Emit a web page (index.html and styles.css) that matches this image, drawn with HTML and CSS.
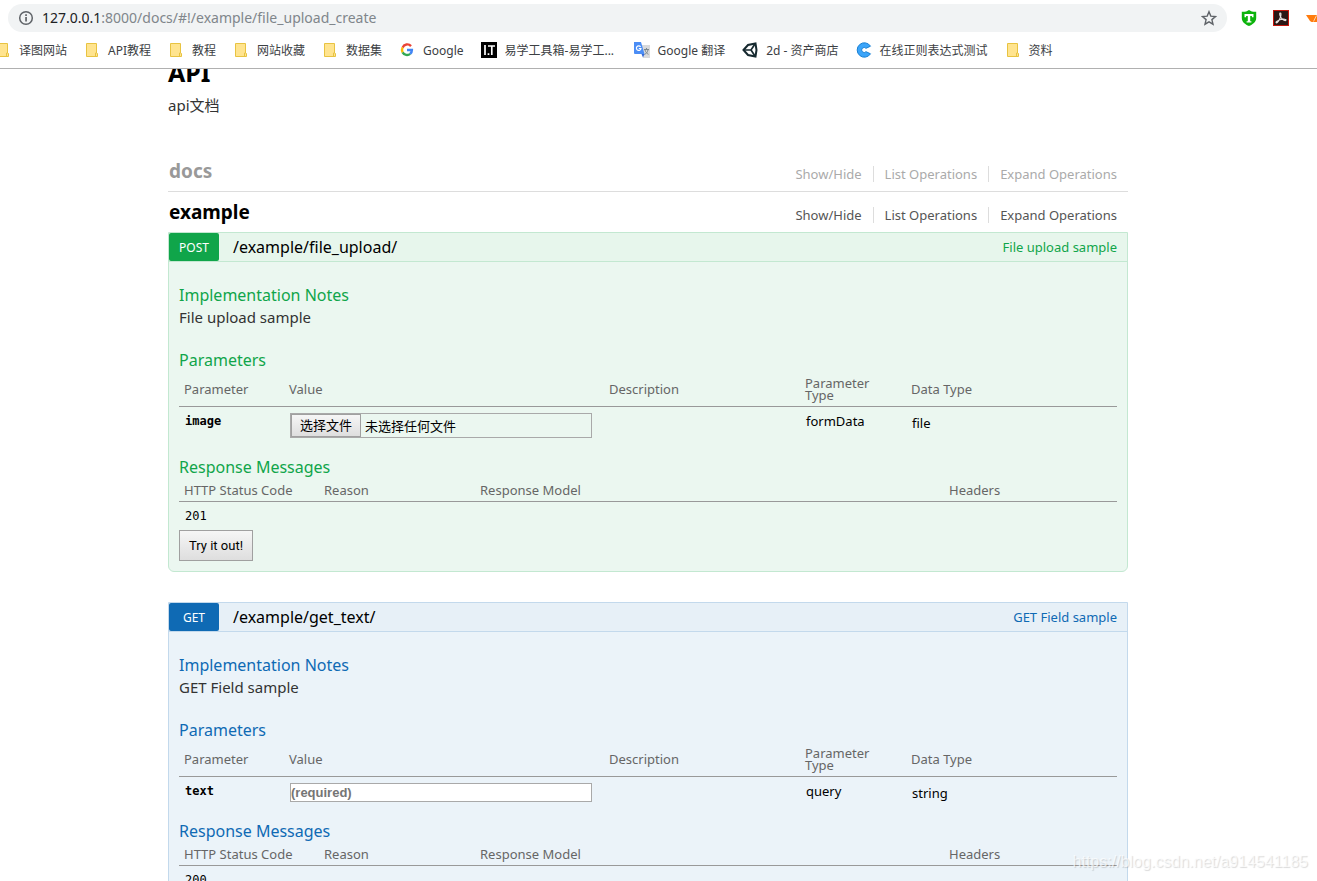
FILE: index.html
```html
<!DOCTYPE html>
<html lang="zh-CN">
<head>
<meta charset="utf-8">
<title>API</title>
<link rel="stylesheet" href="styles.css">
</head>
<body>
<svg class="defs" aria-hidden="true">
  <symbol id="folder" viewBox="0 0 16 16"><path d="M2.500 1.500h10v9.500l1 .5v3h-11z" fill="#ffe48f" stroke="#e8c341"/><path d="M11.500 14.500v-3.500h1" fill="none" stroke="#e8c341"/></symbol>
</svg>
<div class="browser">
  <header class="chrome">
    <div class="toolbar">
      <div class="omnibox">
        <svg class="icon" viewBox="0 0 16 16"><circle cx="8" cy="8" r="6.300" fill="none" stroke="#5f6368" stroke-width="1.500"/><path d="M7.200 7h1.700v4.500H7.200zM7.200 4.300h1.700v1.600H7.200z" fill="#5f6368"/></svg>
        <div class="url" role="textbox" aria-label="Address"><span class="host">127.0.0.1</span>:8000/docs/#!/example/file_upload_create</div>
        <button class="star" type="button" aria-label="Bookmark"><svg class="icon" viewBox="0 0 16 16"><path d="M8 1.700l1.800 4.400 4.700.4-3.600 3.100 1.100 4.600L8 11.800l-4 2.400 1.100-4.600L1.500 6.500l4.700-.4z" fill="none" stroke="#5f6368" stroke-width="1.400"/></svg></button>
      </div>
      <div class="extensions">
        <svg class="icon" viewBox="0 0 16 16"><path d="M8 0C6 1.500 3.500 2 .8 1.800V8c0 4 3.500 6.500 7.200 8 3.700-1.500 7.200-4 7.200-8V1.800C12.500 2 10 1.500 8 0z" fill="#0cb30c"/><path d="M3.500 4h9v3.200h-1.600V6H9.200v5.200h1.200v1.300H5.600v-1.300h1.200V6H5.100v1.200H3.500z" fill="#fff"/></svg>
        <svg class="icon" viewBox="0 0 16 16"><path d="M0 0h16v16H0z" fill="#c3150b"/><path d="M1 1h14v14H1z" fill="#2a1715"/><path d="M7 3c1.300-.5 1.100 2 .5 4C6.600 9.800 4.400 13.300 3.200 12.800c-1-.6 1.800-2.700 4.800-3.300 2.800-.6 5.300-.4 5 .7-.4 1.200-3.200-.4-4.800-2.400C7 6.200 6.100 3.600 7 3z" fill="none" stroke="#e8e1df" stroke-width="1.100"/></svg>
        <svg class="icon" viewBox="0 0 16 16"><path d="M1 5h15v7H6.500L5 11z" fill="#ff7b0d"/><path d="M8.500 11.500l3-6" stroke="#ffd0a5"/></svg>
      </div>
    </div>
    <nav class="bookmarks">
      <a href="#"><svg class="icon"><use href="#folder"/></svg>译图网站</a>
      <a href="#"><svg class="icon"><use href="#folder"/></svg>API教程</a>
      <a href="#"><svg class="icon"><use href="#folder"/></svg>教程</a>
      <a href="#"><svg class="icon"><use href="#folder"/></svg>网站收藏</a>
      <a href="#"><svg class="icon"><use href="#folder"/></svg>数据集</a>
      <a href="#"><svg class="icon" viewBox="0 0 16 16" fill="none" stroke-width="2.400"><path d="M12 4.100A5 5 0 0 0 3.600 5.600" stroke="#ea4335"/><path d="M3.600 5.600a5 5 0 0 0 0 4.800" stroke="#fbbc05"/><path d="M3.600 10.400a5 5 0 0 0 7.600 1.400" stroke="#34a853"/><path d="M11.200 11.800A5 5 0 0 0 12.900 8H8" stroke="#4285f4"/></svg>Google</a>
      <a href="#"><svg class="icon" viewBox="0 0 16 16"><path d="M0 0h16v16H0z" fill="#000"/><path d="M4 3v10M7.500 11.200v1.800M7 4h7M10.800 4v9" stroke="#fff" stroke-width="1.700" fill="none"/></svg><span class="long">易学工具箱-易学工...</span></a>
      <a href="#"><svg class="icon" viewBox="0 0 16 16"><path d="M6 3h10v13H9z" fill="#d8d9dc"/><path d="M10 7.500h5M12.500 6v1.500M14 8c-.5 2-1.500 3.500-3.500 4.500M11 8c.5 2 1.800 3.500 3.500 4.300" stroke="#7b868c" fill="none"/><path d="M0 0h7l3.500 12H1a1 1 0 0 1-1-1z" fill="#4b8df5"/><path d="M7.500 12h3L9 15.500z" fill="#3367d6"/><path d="M6.600 4.800A2.300 2.300 0 1 0 7 6.500H4.800" stroke="#fff" stroke-width="1.200" fill="none"/></svg>Google 翻译</a>
      <a href="#"><svg class="icon" viewBox="0 0 16 16" fill="none" stroke="#16292f" stroke-width="2"><path d="M1.500 8L6 3l7.500-1.500L14.500 8l-1 6.500L6 13z"/><path d="M2 8h7l4-6M9 8l4 6" stroke-width="1.700"/></svg>2d - 资产商店</a>
      <a href="#"><svg class="icon" viewBox="0 0 16 16"><path d="M14.500 4.200A7.200 7.200 0 1 0 14.500 11.800L10 9.700A2.500 2.500 0 1 1 10 6.300z" fill="#3ba5fa" stroke="#1880d4"/></svg>在线正则表达式测试</a>
      <a href="#"><svg class="icon"><use href="#folder"/></svg>资料</a>
    </nav>
  </header>

  <main class="page">
    <div class="container">
      <h1>API</h1>
      <p class="intro">api文档</p>

      <section class="resource muted">
        <h2>docs</h2>
        <nav class="options"><a href="#">Show/Hide</a><a href="#">List Operations</a><a href="#">Expand Operations</a></nav>
      </section>
      <section class="resource">
        <h2>example</h2>
        <nav class="options"><a href="#">Show/Hide</a><a href="#">List Operations</a><a href="#">Expand Operations</a></nav>
      </section>

      <article class="operation post">
        <header class="heading">
          <a class="method" href="#">POST</a>
          <a class="path" href="#">/example/file_upload/</a>
          <a class="summary" href="#">File upload sample</a>
        </header>
        <div class="content">
          <h3>Implementation Notes</h3>
          <p class="notes">File upload sample</p>
          <h3>Parameters</h3>
          <table class="params">
            <thead><tr><th class="c-name">Parameter</th><th class="c-value">Value</th><th class="c-desc">Description</th><th class="c-ptype">Parameter Type</th><th>Data Type</th></tr></thead>
            <tbody><tr>
              <td class="code"><label for="image">image</label></td>
              <td><div class="file"><span class="choose">选择文件</span><span>未选择任何文件</span><input id="image" type="file"></div></td>
              <td></td><td>formData</td><td class="dtype">file</td>
            </tr></tbody>
          </table>
          <h3>Response Messages</h3>
          <table class="responses">
            <thead><tr><th class="c-status">HTTP Status Code</th><th class="c-reason">Reason</th><th class="c-model">Response Model</th><th>Headers</th></tr></thead>
            <tbody><tr><td class="status">201</td><td></td><td></td><td></td></tr></tbody>
          </table>
          <button class="submit" type="button">Try it out!</button>
        </div>
      </article>

      <article class="operation get">
        <header class="heading">
          <a class="method" href="#">GET</a>
          <a class="path" href="#">/example/get_text/</a>
          <a class="summary" href="#">GET Field sample</a>
        </header>
        <div class="content">
          <h3>Implementation Notes</h3>
          <p class="notes">GET Field sample</p>
          <h3>Parameters</h3>
          <table class="params">
            <thead><tr><th class="c-name">Parameter</th><th class="c-value">Value</th><th class="c-desc">Description</th><th class="c-ptype">Parameter Type</th><th>Data Type</th></tr></thead>
            <tbody><tr>
              <td class="code"><label for="text">text</label></td>
              <td><input class="field" id="text" type="text" placeholder="(required)"></td>
              <td></td><td>query</td><td class="dtype">string</td>
            </tr></tbody>
          </table>
          <h3>Response Messages</h3>
          <table class="responses">
            <thead><tr><th class="c-status">HTTP Status Code</th><th class="c-reason">Reason</th><th class="c-model">Response Model</th><th>Headers</th></tr></thead>
            <tbody><tr><td class="status">200</td><td></td><td></td><td></td></tr></tbody>
          </table>
        </div>
      </article>
    </div>
  </main>
  <div class="watermark">https://blog.csdn.net/a914541185</div>
</div>
</body>
</html>
```
FILE: styles.css
```css
* { box-sizing: border-box; }

body {
  margin: 0;
  font-family: "Noto Sans", "Noto Sans CJK SC", sans-serif;
  font-size: 13px;
  color: #000;
  background: #fff;
}

h1, h2, h3, p { margin: 0; }
a { color: inherit; text-decoration: none; }
button { font: inherit; cursor: pointer; }
.defs { position: absolute; width: 0; height: 0; }
.icon { width: 16px; height: 16px; flex: none; display: block; }

.browser {
  display: flex;
  flex-direction: column;
  height: 100vh;
  overflow: hidden;
}

/* Browser chrome */
.chrome { flex: none; border-bottom: 1px solid #b0b0b0; }
.toolbar { display: flex; align-items: center; padding: 4px 0 0 8px; overflow: hidden; }
.omnibox {
  flex: 1;
  display: flex;
  align-items: center;
  gap: 8px;
  height: 28px;
  padding: 0 10px;
  border-radius: 14px;
  background: #f1f3f4;
}
.url { flex: 1; padding-bottom: 2px; font-size: 14px; color: #80868b; white-space: nowrap; }
.host { color: #202124; }
.star { padding: 0; border: 0; background: none; }
.extensions { flex: none; width: 90px; display: flex; gap: 16px; padding-left: 14px; }
.bookmarks {
  display: flex;
  align-items: center;
  gap: 17px;
  height: 36px;
  margin-left: -5px;
  overflow: hidden;
  font-size: 12px;
  color: #3c4043;
  white-space: nowrap;
}
.bookmarks a { display: flex; align-items: center; gap: 8px; }
.long { min-width: 112px; }

/* Page */
.page { flex: 1; min-height: 0; overflow: hidden; }
.container { max-width: 960px; margin: -14px 0 0 168px; }
h1 { font-size: 25px; line-height: 34px; }
.intro { margin: 6px 0 36px; font-size: 15px; line-height: 20px; color: #333; }

.resource {
  display: flex;
  justify-content: space-between;
  align-items: center;
  height: 41px;
  border-bottom: 1px solid #ddd;
}
.resource + .resource { border-bottom: 0; height: 40px; }
.resource h2 { font-size: 19px; line-height: 40px; padding-left: 1px; }
.muted h2 { color: #999; }
.options { display: flex; padding-top: 6px; color: #555; }
.muted .options { color: #aaa; }
.options a { padding: 0 11px; line-height: 16px; border-left: 1px solid #ddd; }
.options a:first-child { border-left: 0; }

.operation {
  margin-bottom: 30px;
  border: 1px solid var(--line);
  border-radius: 0 0 6px 6px;
  background: var(--body);
}
.post { --line: #c3e8d1; --body: #ebf7f0; --head: #e7f6ec; --accent: #10a54a; }
.get { --line: #c3d9ec; --body: #ebf3f9; --head: #e7f0f7; --accent: #0f6ab4; }

.heading {
  display: flex;
  align-items: center;
  height: 29px;
  padding-right: 10px;
  border-bottom: 1px solid var(--line);
  background: var(--head);
}
.method {
  width: 50px;
  line-height: 28px;
  padding-top: 1px;
  height: 28px;
  border-radius: 2px;
  font-size: 12px;
  text-align: center;
  color: #fff;
  background: var(--accent);
}
.path { flex: 1; padding-left: 14px; font-size: 16px; }
.summary { color: var(--accent); }

.content { padding: 22px 10px 10px; }
h3 { font-size: 16px; font-weight: 400; line-height: 22px; color: var(--accent); }
.notes { margin-bottom: 21px; font-size: 15px; line-height: 22px; color: #333; }

table { width: 100%; table-layout: fixed; border-collapse: separate; border-spacing: 0; }
th {
  padding: 0 5px;
  border-bottom: 1px solid #999;
  font-weight: 400;
  line-height: 12px;
  text-align: left;
  color: #666;
}
td { padding: 6px 6px 0; line-height: 16px; vertical-align: top; }
.params { margin-bottom: 18px; }
.params th { height: 36px; }
.responses th { height: 24px; }
.c-name { width: 105px; }
.c-value { width: 320px; }
.c-desc { width: 196px; }
.c-ptype { width: 106px; padding-right: 30px; }
.c-status { width: 140px; }
.c-reason { width: 156px; }
.c-model { width: 469px; }
.code { font: bold 12px/16px "DejaVu Sans Mono", monospace; }
.dtype { padding-top: 8px; }
.status { height: 28px; font: 12px/16px "DejaVu Sans Mono", monospace; }

.file {
  position: relative;
  display: flex;
  align-items: center;
  gap: 4px;
  width: 302px;
  height: 25px;
  border: 1px solid #a9a9a9;
}
.file input { position: absolute; inset: 0; width: 100%; opacity: 0; cursor: pointer; }
.choose {
  height: 23px;
  padding: 0 8px;
  line-height: 21px;
  border: 1px solid #a0a0a0;
  background: linear-gradient(#f6f6f6, #dedede);
}
.field {
  display: block;
  width: 302px;
  height: 19px;
  padding: 0;
  border: 1px solid #a9a9a9;
  font: bold 13px "Liberation Sans", sans-serif;
  background: #fff;
}
.field::placeholder { color: #757575; }
.submit {
  display: block;
  height: 31px;
  padding: 0 9px;
  border: 1px solid #a0a0a0;
  font: 13px Roboto, sans-serif;
  color: #000;
  background: linear-gradient(#f6f6f6, #dedede);
}

.watermark {
  position: absolute;
  right: 9px;
  bottom: 9px;
  font: 16px/20px "Liberation Sans", sans-serif;
  color: rgba(255, 255, 255, 0.7);
  text-shadow: 1px 1px 1px rgba(0, 0, 0, 0.15);
}
```
